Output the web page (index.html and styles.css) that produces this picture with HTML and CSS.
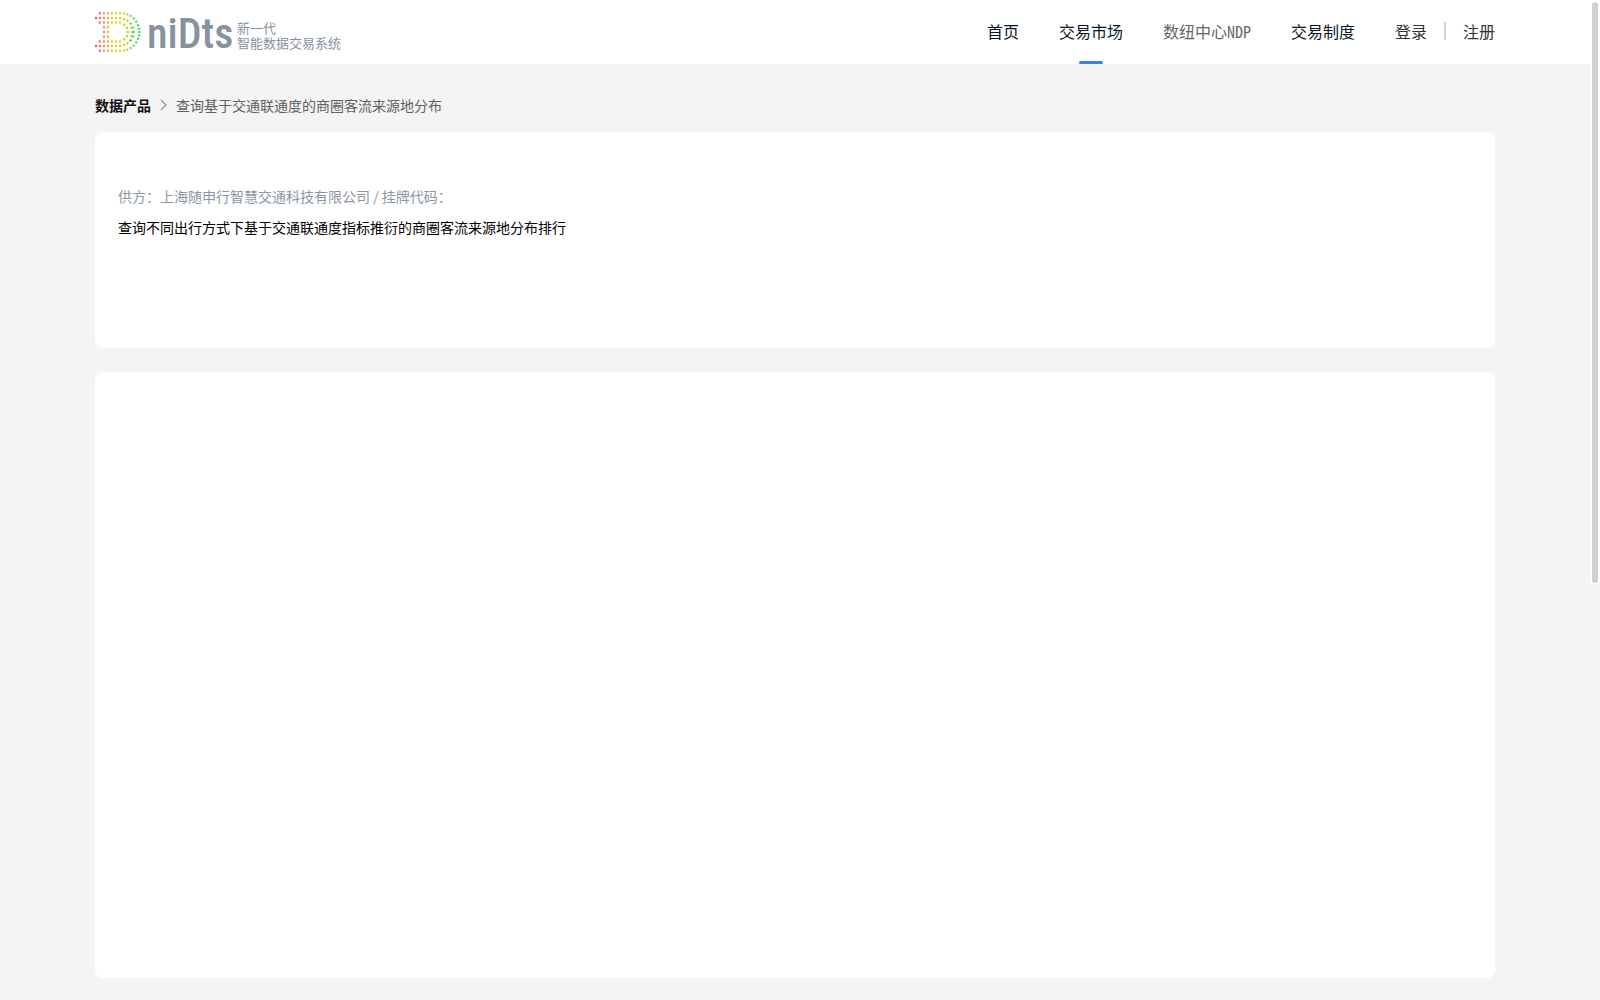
FILE: index.html
```html
<!DOCTYPE html>
<html lang="zh-CN">
<head>
<meta charset="utf-8">
<title>数据产品</title>
<link rel="stylesheet" href="styles.css">
</head>
<body>
<header class="header">
  <div class="container header-inner">
    <a class="brand" href="#">
      <svg class="brand-mark" width="48" height="42" viewBox="94 11 48 42" aria-hidden="true">
        <defs>
          <linearGradient id="rainbow" gradientUnits="userSpaceOnUse" x1="95" y1="0" x2="140" y2="0">
            <stop offset="0" stop-color="#ff3f86"/>
            <stop offset=".2" stop-color="#ff8652"/>
            <stop offset=".42" stop-color="#f5cd25"/>
            <stop offset=".65" stop-color="#c8dc20"/>
            <stop offset=".85" stop-color="#78d83c"/>
            <stop offset="1" stop-color="#25d978"/>
          </linearGradient>
        </defs>
        <g fill="none" stroke="url(#rainbow)" stroke-linecap="round" stroke-width="2.4">
          <path d="M100 13.2h.01M104 13.2h.01M108 13.2h.01M112 13.2h.01M116 13.2h.01M120 13.2h.01M124 13.6h.01M127.3 14.4h.01M130.6 16h.01M133.8 18.4h.01M136.2 21.6h.01M138 25.2h.01M139 28.6h.01M139.3 32h.01M139 35.4h.01M138 38.8h.01M136.2 42.4h.01M133.8 45.6h.01M130.6 48h.01M127.3 49.6h.01M124 50.4h.01M120 50.8h.01M116 50.8h.01M112 50.8h.01M108 50.8h.01M104 50.8h.01M100 50.8h.01"/>
          <path d="M96 18h.01M100 18h.01M104 18h.01M108 18h.01M112 18h.01M116 18h.01M120 18h.01M124 19h.01M127.4 20.8h.01M96 46h.01M100 46h.01M104 46h.01M108 46h.01M112 46h.01M116 46h.01M120 46h.01M124 45h.01M127.4 43.2h.01"/>
          <path d="M130 23.6h1M131.5 27.6h1.5M132.3 32h1.5M131.5 36.4h1.5M130 40.4h1"/>
          <path d="M99.7 22.5h.01M104 22.5h.01M108 22.5h.01M112 22.5h.01M116 22.5h.01M120 22.5h.01M124.3 24.8h.01M127 28h.01M127.8 32h.01M127 36h.01M124.3 39.2h.01M120 41.5h.01M116 41.5h.01M112 41.5h.01M108 41.5h.01M104 41.5h.01M99.7 41.5h.01"/>
          <path d="M104 27.2h.01M104 32h.01M104 36.8h.01M108 27.2h.01M108 32h.01M108 36.8h.01"/>
        </g>
      </svg>
      <span class="brand-name">niDts</span>
      <span class="brand-tag">新一代<br>智能数据交易系统</span>
    </a>
    <nav class="nav">
      <a class="nav-link" href="#">首页</a>
      <a class="nav-link nav-active" href="#">交易市场</a>
      <a class="nav-link nav-muted" href="#">数纽中心NDP</a>
      <a class="nav-link" href="#">交易制度</a>
      <div class="account">
        <a class="account-link" href="#">登录</a>
        <a class="account-link account-register" href="#">注册</a>
      </div>
    </nav>
  </div>
</header>
<main class="container main">
  <div class="breadcrumb">
    <a class="crumb-root" href="#">数据产品</a>
    <svg class="crumb-arrow" width="9" height="12" viewBox="0 0 9 12" aria-hidden="true"><path d="M2 1l5 5-5 5" fill="none" stroke="#999" stroke-width="1.4"/></svg>
    <span>查询基于交通联通度的商圈客流来源地分布</span>
  </div>
  <section class="card summary">
    <p class="supplier">供方：上海随申行智慧交通科技有限公司 / 挂牌代码：</p>
    <p class="description">查询不同出行方式下基于交通联通度指标推衍的商圈客流来源地分布排行</p>
  </section>
  <section class="card detail"></section>
</main>
<div class="scroll-thumb"></div>
</body>
</html>
```
FILE: styles.css
```css
* {
  box-sizing: border-box;
}

body {
  margin: 0;
  padding-right: 10px;
  background: #f4f4f4;
  color: #333;
  font-family: "Noto Sans CJK SC", sans-serif;
  font-size: 14px;
  line-height: 20px;
}

a {
  color: inherit;
  text-decoration: none;
}

p {
  margin: 0;
}

.container {
  max-width: 1400px;
  margin: 0 auto;
}

.header {
  margin-right: -10px;
  padding-right: 10px;
  background: #fff;
}

.header-inner {
  display: flex;
  justify-content: space-between;
  height: 64px;
}

.brand {
  display: flex;
  align-items: center;
  color: #8792a1;
}

.brand-mark {
  margin-left: -1px;
}

.brand-name {
  width: 90px;
  padding-top: 4px;
  margin-left: 5px;
  font-family: "Roboto Condensed", Roboto, sans-serif;
  font-size: 42px;
  font-weight: 500;
  line-height: 60px;
}

.brand-tag {
  padding-top: 6px;
  font-size: 13px;
  line-height: 15px;
  white-space: nowrap;
}

.nav {
  display: flex;
  gap: 40px;
  font-size: 16px;
  line-height: 62px;
  white-space: nowrap;
}

.nav-link {
  position: relative;
  color: #071426;
}

.nav-active::after {
  content: "";
  position: absolute;
  bottom: 0;
  left: 50%;
  width: 24px;
  height: 3px;
  margin-left: -12px;
  border-radius: 2px;
  background: #3381f2;
}

.nav-muted {
  color: #666;
  font-feature-settings: "hwid";
}

.account {
  display: flex;
  align-items: center;
  gap: 17px;
  height: 62px;
}

.account-register {
  display: flex;
  align-items: center;
  gap: 17px;
}

.account-register::before {
  content: "";
  width: 2px;
  height: 18px;
  background: #d4d4d4;
}

.main {
  padding: 31px 0 22px;
}

.breadcrumb {
  display: flex;
  align-items: center;
  gap: 8px;
  margin-bottom: 17px;
  color: #606060;
}

.crumb-root {
  color: #111;
  font-weight: 700;
}

.card {
  border-radius: 8px;
  background: #fff;
}

.summary {
  min-height: 216px;
  margin-bottom: 24px;
  padding: 54px 23px;
}

.supplier {
  margin-bottom: 11px;
  color: #8c97a6;
}

.description {
  color: #000;
}

.detail {
  min-height: 606px;
}

.scroll-thumb {
  position: fixed;
  top: 0;
  right: 0;
  width: 10px;
  height: 585px;
  border: 2px solid #fff;
  border-radius: 5px;
  background: #d0d0d0;
}
```
